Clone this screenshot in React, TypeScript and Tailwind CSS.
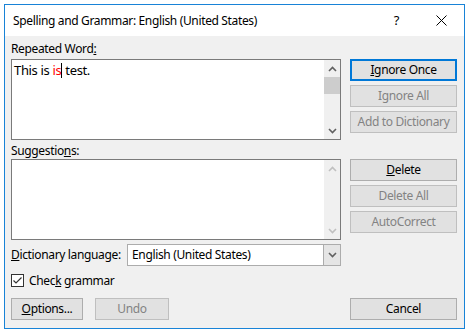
import type { ReactNode } from "react"

const font = { fontFamily: '"Segoe UI", "Noto Sans", sans-serif' }

function Chevron({ dir, color = "#606060" }: { dir: "up" | "down"; color?: string }) {
  return (
    <svg width="9" height="6" viewBox="0 0 9 6">
      <path
        d={dir === "up" ? "M1 5 L4.5 1.5 L8 5" : "M1 1 L4.5 4.5 L8 1"}
        fill="none"
        stroke={color}
        strokeWidth="1.6"
      />
    </svg>
  )
}

function Btn({
  children,
  disabled,
  primary,
  className = "",
}: {
  children: ReactNode
  disabled?: boolean
  primary?: boolean
  className?: string
}) {
  const border = primary
    ? "border-2 border-[#0078d7]"
    : disabled
      ? "border border-[#bfbfbf]"
      : "border border-[#adadad]"
  return (
    <div
      className={`h-[22px] flex items-center justify-center text-[12px] bg-[#e1e1e1] ${border} ${
        disabled ? "text-[#838383]" : "text-black"
      } ${className}`}
    >
      {children}
    </div>
  )
}

function ListBox({ children, active }: { children?: ReactNode; active?: boolean }) {
  return (
    <div className="h-[81px] border border-[#7a7a7a] bg-white flex">
      <div className="flex-1 pl-[2px] pt-[1px]">{children}</div>
      <div className="w-[16px] bg-[#f0f0f0] flex flex-col items-center">
        <div className="h-[17px] flex items-center justify-center">
          <Chevron dir="up" color={active ? "#606060" : "#c0c0c0"} />
        </div>
        {active && <div className="w-full h-[17px] bg-[#cdcdcd]" />}
        <div className="flex-1" />
        <div className="h-[17px] flex items-center justify-center">
          <Chevron dir="down" color={active ? "#606060" : "#c0c0c0"} />
        </div>
      </div>
    </div>
  )
}

export default function App() {
  return (
    <div
      className="w-[470px] h-[331px] bg-white pl-[4px] pr-[5px] pt-[4px] pb-[2px] tracking-[-0.35px] whitespace-nowrap"
      style={font}
    >
      <div className="h-full border border-[#1883d7] flex flex-col">
        <div className="h-[31px] bg-white flex items-center pl-[8px] pr-[17px] text-[12px] text-black">
          <span className="mr-auto">Spelling and Grammar: English (United States)</span>
          <span className="mr-[37px] text-[13px]">?</span>
          <svg width="11" height="11" viewBox="0 0 11 11">
            <path d="M0.5 0.5 L10.5 10.5 M10.5 0.5 L0.5 10.5" stroke="#000" strokeWidth="1" />
          </svg>
        </div>
        <div className="flex-1 bg-[#f0f0f0] flex pl-[6px] pr-[7px] pt-[5px] pb-[8px] gap-[9px] text-[12px] text-black">
          <div className="w-[330px] flex flex-col">
            <div className="h-[16px] leading-[16px]">
              Repeated Word<span className="underline">:</span>
            </div>
            <div className="mt-[2px]">
              <ListBox active>
                <div className="text-[13px] leading-[18px] flex items-center">
                  <span>This is&nbsp;</span>
                  <span className="text-[#ff0000]">is</span>
                  <span className="w-px h-[15px] bg-black" />
                  <span>&nbsp;test.</span>
                </div>
              </ListBox>
            </div>
            <div className="h-[16px] leading-[16px] mt-[3px]">
              Suggestio<span className="underline">n</span>s:
            </div>
            <ListBox />
            <div className="flex items-center mt-[4px] h-[22px]">
              <span className="w-[116px]">
                <span className="underline">D</span>ictionary language:
              </span>
              <div className="flex-1 h-[22px] border border-[#acacac] bg-white flex">
                <span className="flex-1 pl-[4px] leading-[20px]">English (United States)</span>
                <div className="w-[17px] bg-[#e5e5e5] border-l border-[#acacac] flex items-center justify-center">
                  <Chevron dir="down" />
                </div>
              </div>
            </div>
            <div className="flex items-center mt-[8px] h-[13px]">
              <div className="w-[13px] h-[13px] border border-[#333333] bg-white flex items-center justify-center">
                <svg width="11" height="11" viewBox="0 0 11 11">
                  <path d="M1.5 5.5 L4 8 L9.5 2.5" fill="none" stroke="#333333" strokeWidth="1.2" />
                </svg>
              </div>
              <span className="ml-[5px]">
                Chec<span className="underline">k</span> grammar
              </span>
            </div>
            <div className="flex gap-[12px] mt-auto">
              <Btn className="w-[72px]">
                <span className="underline">O</span>ptions...
              </Btn>
              <Btn disabled className="w-[74px]">
                Undo
              </Btn>
            </div>
          </div>
          <div className="w-[107px] flex flex-col pt-[18px]">
            <Btn primary>
              <span className="underline">I</span>gnore Once
            </Btn>
            <Btn disabled className="mt-[4px]">
              Ignore All
            </Btn>
            <Btn disabled className="mt-[4px]">
              Add to Dictionary
            </Btn>
            <Btn className="mt-[26px]">
              <span className="underline">D</span>elete
            </Btn>
            <Btn disabled className="mt-[4px]">
              Delete All
            </Btn>
            <Btn disabled className="mt-[4px]">
              AutoCorrect
            </Btn>
            <Btn className="mt-auto">Cancel</Btn>
          </div>
        </div>
      </div>
    </div>
  )
}
